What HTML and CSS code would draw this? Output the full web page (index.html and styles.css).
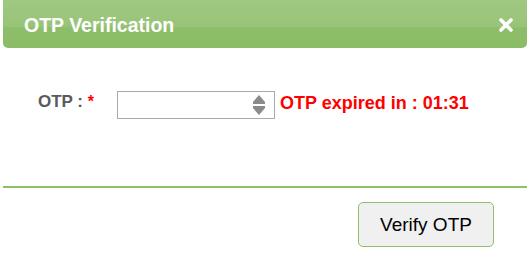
FILE: index.html
```html
<!DOCTYPE html>
<html lang="en">

<head>
    <meta charset="UTF-8">
    <meta name="viewport" content="width=device-width, initial-scale=1.0">
    <title>OTP Verification</title>
    <link rel="stylesheet" href="styles.css">
</head>

<body>
    <div class="dialog">
        <div class="dialog-header">
            <span class="dialog-title">OTP Verification</span>
            <svg class="dialog-close" width="14" height="14" viewBox="0 0 14 14">
                <path d="M2 2 L12 12 M12 2 L2 12" stroke="#fff" stroke-width="3.6" stroke-linecap="round"/>
            </svg>
        </div>
        <div class="dialog-body">
            <label class="otp-label">OTP : <span class="required">*</span></label>
            <div class="otp-box">
                <input type="text" class="otp-input">
                <svg class="spinner" width="12" height="20" viewBox="0 0 12 20">
                    <path d="M6 0 L12 7 L12 9 L0 9 L0 7 Z" fill="#8a8a8a"/>
                    <path d="M0 11 L12 11 L12 13 L6 20 L0 13 Z" fill="#8a8a8a"/>
                </svg>
            </div>
            <span class="otp-timer">OTP expired in : 01:31</span>
        </div>
        <div class="dialog-footer">
            <button class="verify-button">Verify OTP</button>
        </div>
    </div>
</body>
</html>
```

FILE: styles.css
```css
* {
    margin: 0;
    padding: 0;
    box-sizing: border-box;
}

body {
    font-family: "Liberation Sans", Arial, sans-serif;
    background: #fff;
}

.dialog {
    width: 530px;
    height: 273px;
    padding: 0 3px;
}

.dialog-header {
    height: 48px;
    display: flex;
    align-items: center;
    justify-content: space-between;
    padding: 0 14px 0 21px;
    border-radius: 0 0 5px 5px;
    background: linear-gradient(to bottom, #9fc880 0%, #98c479 55%, #8dbd69 58%, #8bbc66 100%);
}

.dialog-title {
    color: #fff;
    font-size: 19.5px;
    font-weight: bold;
    padding-top: 2px;
}

.dialog-close {
    display: block;
    margin-top: 2px;
}

.dialog-body {
    height: 140px;
    display: flex;
    align-items: center;
    padding: 0 0 24px 35px;
    border-bottom: 2px solid #8bc16a;
}

.otp-label {
    color: #5a5a5a;
    font-size: 17px;
    font-weight: bold;
    width: 79px;
    margin-top: -6px;
}

.required {
    color: #f00;
    font-size: 16px;
}

.otp-box {
    width: 158px;
    height: 28px;
    border: 1px solid #a9a9a9;
    display: flex;
    align-items: center;
    padding-right: 9px;
}

.otp-input {
    flex: 1;
    min-width: 0;
    height: 100%;
    border: 0;
    outline: none;
}

.spinner {
    display: block;
}

.otp-timer {
    color: #f00;
    font-size: 18px;
    font-weight: bold;
    margin-left: 5px;
    margin-top: -3px;
}

.dialog-footer {
    display: flex;
    justify-content: flex-end;
    padding: 14px 33px 0 0;
}

.verify-button {
    width: 136px;
    height: 45px;
    font-family: "Liberation Sans", Arial, sans-serif;
    font-size: 19px;
    color: #000;
    background-color: #f0f0f0;
    border: 1px solid #8bc16a;
    border-radius: 5px;
    cursor: pointer;
}
```
